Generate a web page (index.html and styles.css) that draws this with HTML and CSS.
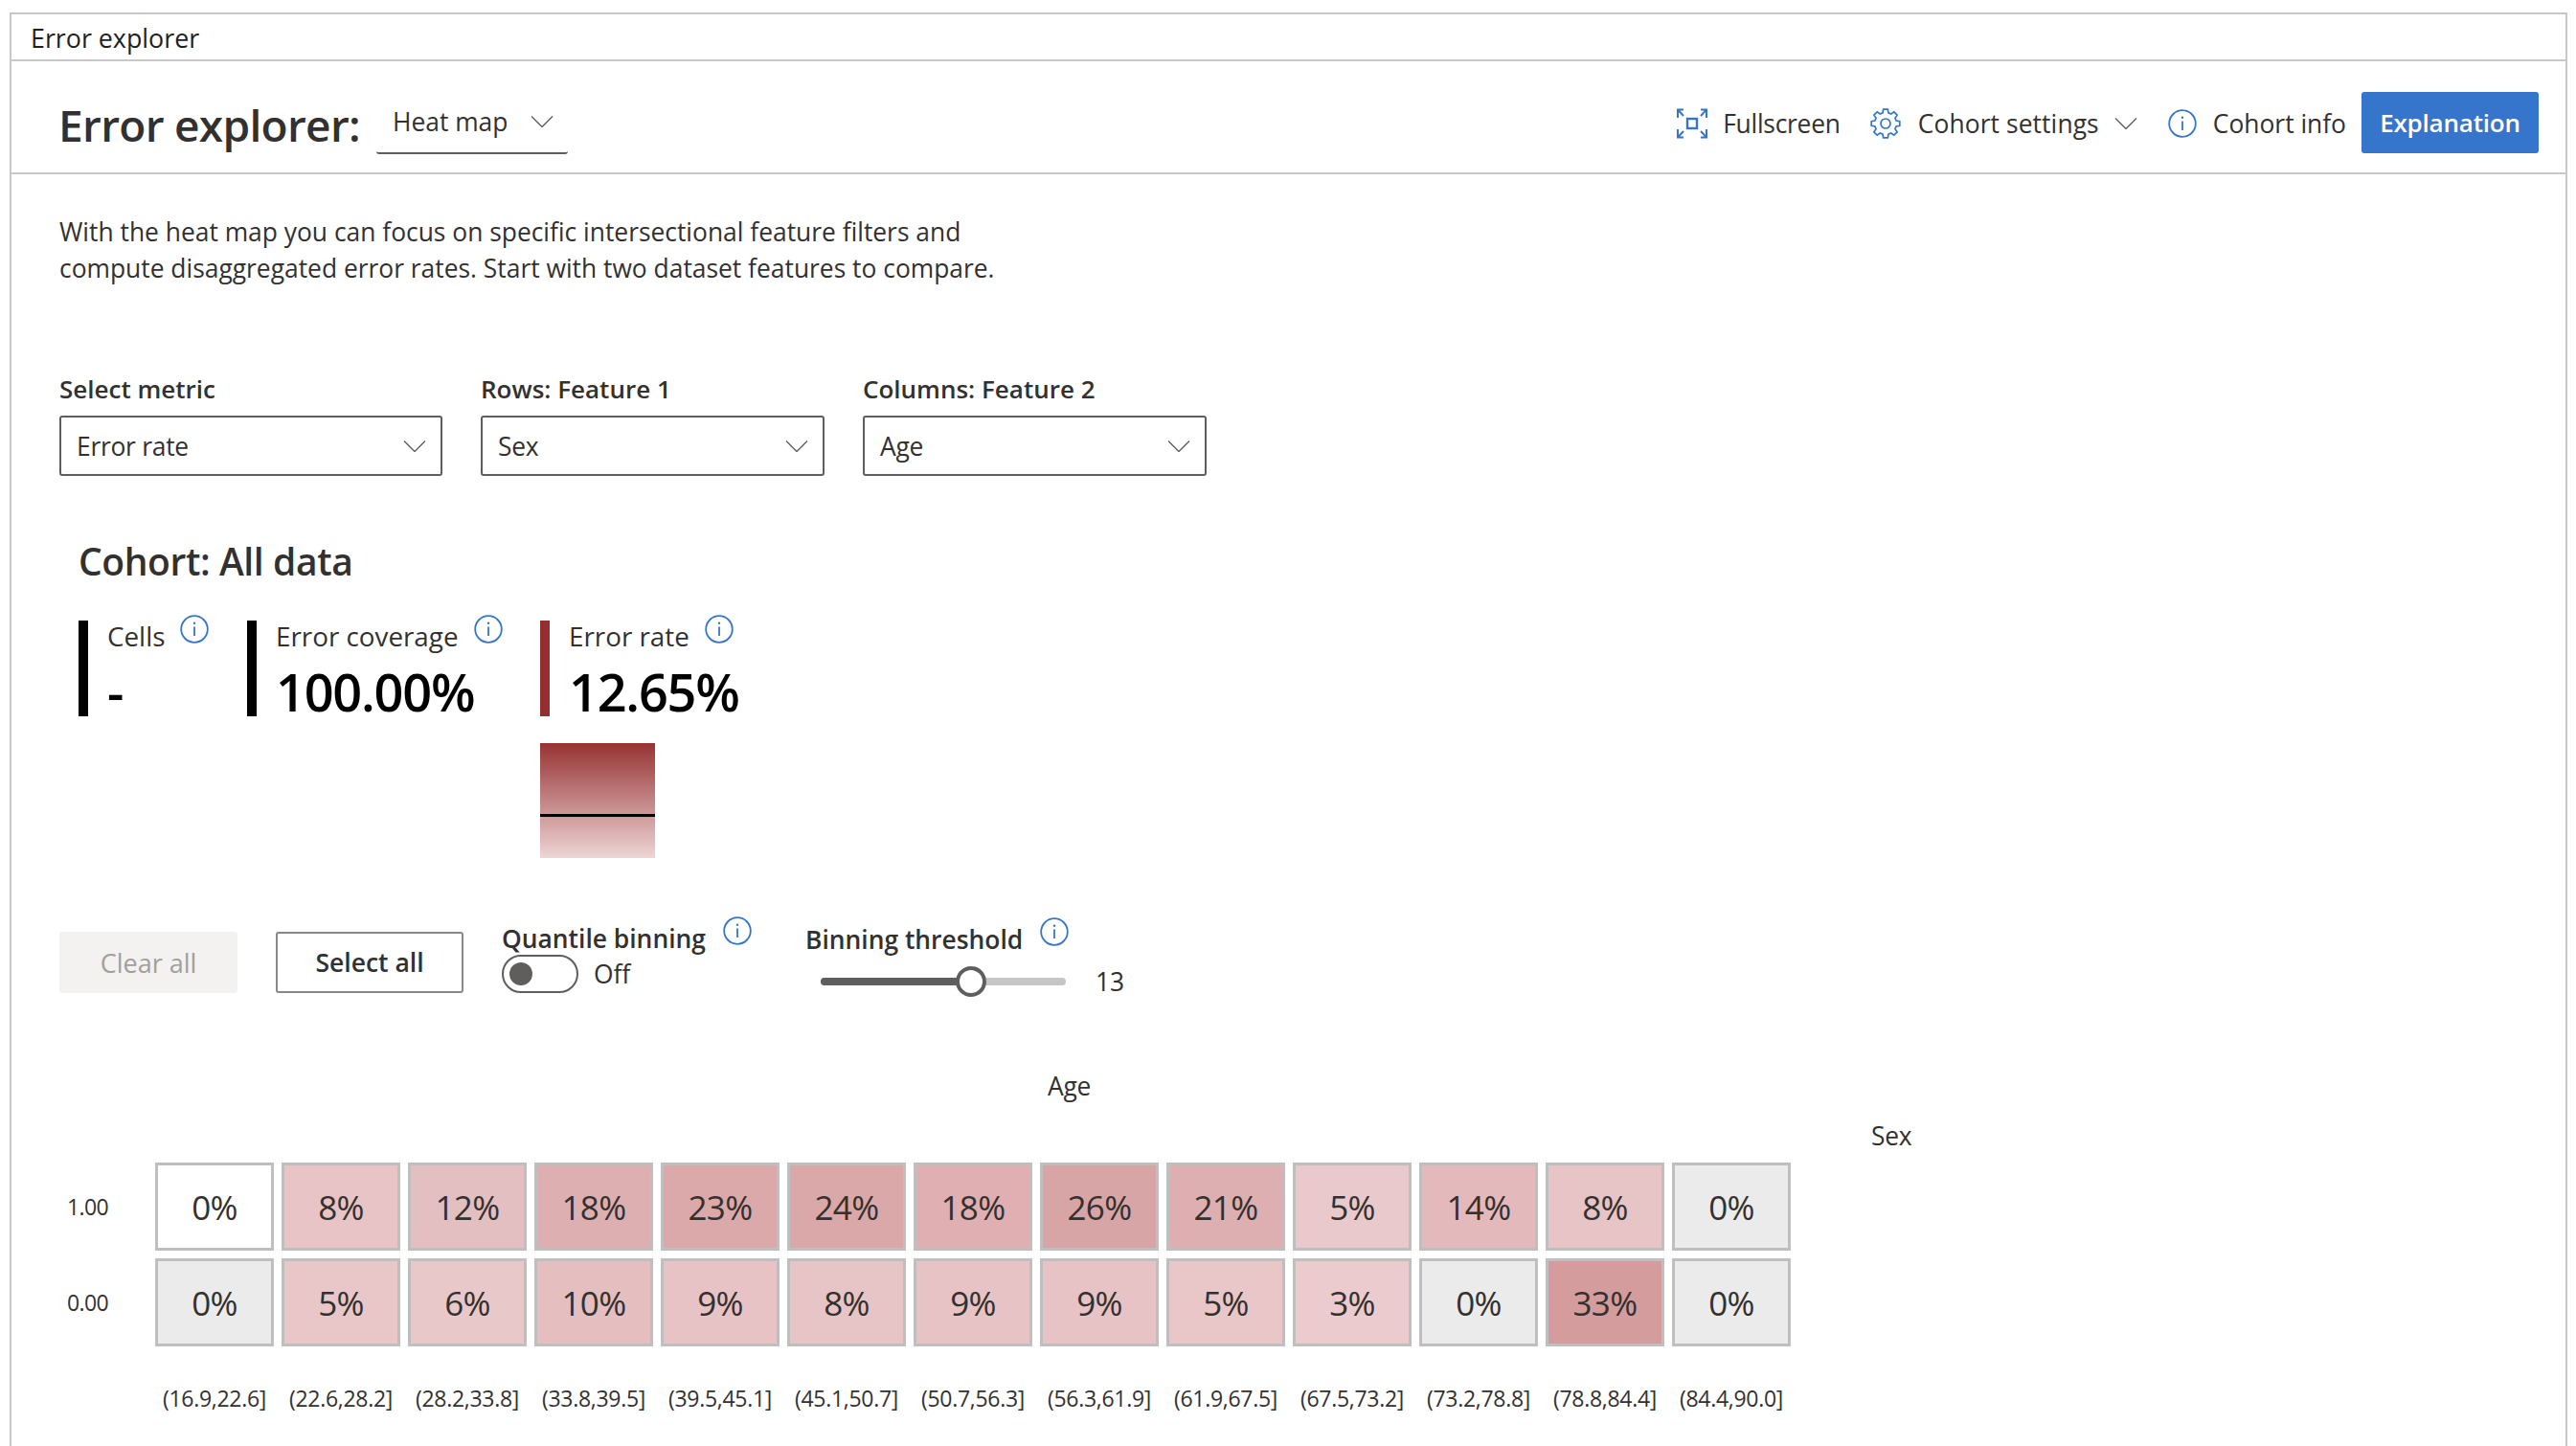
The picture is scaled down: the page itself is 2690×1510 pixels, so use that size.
FILE: index.html
```html
<!DOCTYPE html>
<html lang="en">
<head>
<meta charset="utf-8">
<title>Error explorer</title>
<link rel="stylesheet" href="styles.css">
</head>
<body>
<svg class="defs" aria-hidden="true">
  <symbol id="info" viewBox="0 0 30 30"><circle cx="15" cy="15" r="13.8" fill="none" stroke="currentColor" stroke-width="1.8"/><path d="M15 12.5V22" fill="none" stroke="currentColor" stroke-width="1.8"/><circle cx="15" cy="8.8" r="1.2" fill="currentColor"/></symbol>
  <symbol id="chev" viewBox="0 0 24 12"><path d="M1 .5 12 11.5 23 .5" fill="none" stroke="currentColor" stroke-width="1.4"/></symbol>
</svg>
<main class="frame">
  <div class="tabbar">Error explorer</div>
  <header class="head">
    <h1 class="title">Error explorer:</h1>
    <div class="viewpick"><span>Heat map</span><svg class="chev"><use href="#chev"/></svg></div>
    <nav class="actions">
      <a class="action act-full">
        <svg class="ico" viewBox="0 0 34 32" fill="none" stroke="#3576cc" stroke-width="2"><rect x="12" y="11" width="10" height="10" stroke-width="2.4"/><path d="M2 10V1.5H8M2 1.5 8 8M32 10V1.5H26M32 1.5 26 8M2 22V30.500H8M2 30.500 8 24M32 22V30.500H26M32 30.500 26 24"/></svg>
        Fullscreen</a>
      <a class="action act-gear">
        <svg class="ico" viewBox="0 0 32 32" fill="none" stroke="#3576cc" stroke-width="1.7"><polygon points="13.02,4.9 13.65,1.2 18.35,1.2 18.98,4.9 21.74,6.04 24.8,3.87 28.13,7.2 25.96,10.26 27.1,13.02 30.8,13.65 30.8,18.35 27.1,18.98 25.96,21.74 28.13,24.8 24.8,28.13 21.74,25.96 18.98,27.1 18.35,30.8 13.65,30.8 13.02,27.1 10.26,25.96 7.2,28.13 3.87,24.8 6.04,21.74 4.9,18.98 1.2,18.35 1.2,13.65 4.9,13.02 6.04,10.26 3.87,7.2 7.2,3.87 10.26,6.04"/><circle cx="16" cy="16" r="5"/></svg>
        Cohort settings<svg class="chev chev-set"><use href="#chev"/></svg></a>
      <a class="action act-info"><svg class="info"><use href="#info"/></svg>Cohort info</a>
      <button class="btn-primary">Explanation</button>
    </nav>
  </header>

  <section class="content">
    <p class="intro">With the heat map you can focus on specific intersectional feature filters and<br>compute disaggregated error rates. Start with two dataset features to compare.</p>

    <div class="selects">
      <div class="field f-metric"><label>Select metric</label><div class="select"><span>Error rate</span><svg class="chev"><use href="#chev"/></svg></div></div>
      <div class="field f-rows"><label>Rows: Feature 1</label><div class="select"><span>Sex</span><svg class="chev"><use href="#chev"/></svg></div></div>
      <div class="field f-cols"><label>Columns: Feature 2</label><div class="select"><span>Age</span><svg class="chev"><use href="#chev"/></svg></div></div>
    </div>

    <div class="cohort">
      <h2 class="cohort-title">Cohort: All data</h2>
      <div class="metrics">
        <div class="metric-col m-cells">
          <div class="metric"><div class="m-label"><span>Cells</span><svg class="info"><use href="#info"/></svg></div><div class="m-value">-</div></div>
        </div>
        <div class="metric-col m-cover">
          <div class="metric"><div class="m-label"><span>Error coverage</span><svg class="info"><use href="#info"/></svg></div><div class="m-value">100.00%</div></div>
        </div>
        <div class="metric-col m-rate">
          <div class="metric metric-red"><div class="m-label"><span>Error rate</span><svg class="info"><use href="#info"/></svg></div><div class="m-value">12.65%</div></div>
          <div class="legend"><div class="legend-line"></div></div>
        </div>
      </div>
    </div>

    <div class="controls">
      <button class="btn btn-off">Clear all</button>
      <button class="btn btn-sel">Select all</button>
      <div class="ctl ctl-q">
        <div class="ctl-label"><span>Quantile binning</span><svg class="info"><use href="#info"/></svg></div>
        <div class="toggle-row"><div class="toggle"><i class="knob"></i></div><span>Off</span></div>
      </div>
      <div class="ctl ctl-t">
        <div class="ctl-label"><span>Binning threshold</span><svg class="info"><use href="#info"/></svg></div>
        <div class="slider-row"><div class="slider"><div class="slider-fill"></div><i class="thumb"></i></div><span>13</span></div>
      </div>
    </div>

    <div class="axis-x">Age</div>
    <div class="axis-y">Sex</div>

    <div class="heat">
      <div class="row-label">1.00</div>
      <div class="cell c-w">0%</div><div class="cell c-8a">8%</div><div class="cell c-12">12%</div><div class="cell c-18a">18%</div><div class="cell c-23">23%</div><div class="cell c-24">24%</div><div class="cell c-18b">18%</div><div class="cell c-26">26%</div><div class="cell c-21">21%</div><div class="cell c-5a">5%</div><div class="cell c-14">14%</div><div class="cell c-8b">8%</div><div class="cell c-g">0%</div>
      <div class="row-label">0.00</div>
      <div class="cell c-g">0%</div><div class="cell c-5b">5%</div><div class="cell c-6">6%</div><div class="cell c-10">10%</div><div class="cell c-9">9%</div><div class="cell c-8b">8%</div><div class="cell c-9">9%</div><div class="cell c-9">9%</div><div class="cell c-5b">5%</div><div class="cell c-3">3%</div><div class="cell c-g">0%</div><div class="cell c-33">33%</div><div class="cell c-g">0%</div>
      <div class="col-spacer"></div>
      <div class="col-label">(16.9,22.6]</div><div class="col-label">(22.6,28.2]</div><div class="col-label">(28.2,33.8]</div><div class="col-label">(33.8,39.5]</div><div class="col-label">(39.5,45.1]</div><div class="col-label">(45.1,50.7]</div><div class="col-label">(50.7,56.3]</div><div class="col-label">(56.3,61.9]</div><div class="col-label">(61.9,67.5]</div><div class="col-label">(67.5,73.2]</div><div class="col-label">(73.2,78.8]</div><div class="col-label">(78.8,84.4]</div><div class="col-label">(84.4,90.0]</div>
    </div>
  </section>
</main>
</body>
</html>
```
FILE: styles.css
```css
* { box-sizing: border-box; }
html, body { margin: 0; height: 1510px; overflow: hidden; background: #fff; }
body { font-family: "Open Sans", "Noto Sans", sans-serif; font-size: 26.4px; color: #323130; }
.defs { display: none; }
.frame { margin: 13px 0 0 10px; width: 2671px; height: 1497px; border: 2px solid #c8c8c8; border-bottom: 0; }
.tabbar { height: 49px; padding-left: 20px; border-bottom: 2px solid #c8c8c8; font-size: 26.8px; line-height: 49px; color: #201f1e; }

.head { height: 118px; display: flex; align-items: center; padding: 12px 28px 0 49px; border-bottom: 2px solid #c8c8c8; }
.title { margin: 4px 17px 0 0; font-size: 46px; font-weight: 600; letter-spacing: -.7px; line-height: 60px; }
.viewpick { width: 200px; height: 64px; margin-top: 2px; padding: 0 15px 3px 17px; display: flex; align-items: center; justify-content: space-between; border-bottom: 2px solid #605e5c; border-radius: 0 0 3px 3px; }
.chev { width: 24px; height: 12px; color: #605e5c; flex: none; }
.actions { margin-left: auto; display: flex; align-items: center; }
.action { display: flex; align-items: center; padding-top: 1px; }
.ico { width: 34px; height: 32px; flex: none; }
.act-full { margin-right: 30px; letter-spacing: -.25px; }
.act-full .ico { margin-right: 15px; }
.act-gear { margin-right: 32px; letter-spacing: .1px; }
.act-gear .ico { margin-right: 17px; }
.chev-set { margin-left: 16px; }
.info { width: 30px; height: 30px; color: #3576cc; flex: none; }
.act-info .info { margin-right: 17px; }
.act-info { margin-right: 16px; }
.btn-primary { width: 185px; height: 64px; border: 0; border-radius: 3px; background: #3576cc; color: #fff; font: 600 26px "Open Sans", sans-serif; letter-spacing: -.2px; padding: 0; }

.content { padding: 41px 0 0 50px; }
.intro { margin: 0; line-height: 38px; }

.selects { display: flex; gap: 40px; margin-top: 88px; }
.field label { display: block; font-size: 26px; font-weight: 600; line-height: 38px; margin-bottom: 9px; }
.f-metric { width: 400px; }
.f-rows { width: 359px; }
.f-cols { width: 359px; }
.select { height: 63px; padding: 0 15px 0 16px; display: flex; align-items: center; justify-content: space-between; border: 2px solid #605e5c; border-radius: 3px; letter-spacing: -.25px; }

.cohort { padding-left: 20px; margin-top: 62px; }
.cohort-title { margin: 0; font-size: 39px; font-weight: 600; line-height: 54px; letter-spacing: -.4px; }
.metrics { display: flex; margin-top: 35px; align-items: flex-start; }
.m-cells { width: 176px; }
.m-cover { width: 306px; }
.metric { height: 100px; border-left: 10px solid #000; padding-left: 20px; }
.metric-red { border-left-color: #952f2f; }
.m-label { display: flex; align-items: flex-start; height: 36px; line-height: 32px; font-size: 27.8px; }
.m-label .info { margin-left: 16px; margin-top: -6px; }
.m-value { font-size: 54px; font-weight: 600; color: #000; line-height: 62px; letter-spacing: -1.2px; margin-top: 7px; }
.legend { width: 120px; height: 120px; margin-top: 28px; display: flex; align-items: center; background: linear-gradient(#973333, #eed5d5); padding-top: 30px; }
.legend-line { width: 100%; height: 3px; background: #000; }

.controls { display: flex; align-items: flex-end; margin-top: 65px; }
.btn { height: 64px; font: 600 26.5px "Open Sans", sans-serif; border-radius: 3px; padding: 0; }
.btn-off { width: 186px; margin-right: 40px; background: #f3f2f1; border: 0; color: #a19f9d; font-weight: 400; font-size: 27px; }
.btn-sel { width: 196px; margin-right: 40px; background: #fff; border: 2px solid #8a8886; color: #323130; }
.ctl-label { display: flex; align-items: flex-start; height: 38px; line-height: 38px; font-weight: 600; }
.ctl-label .info { margin-left: 18px; margin-top: -4px; }
.ctl-q { width: 317px; }
.toggle-row { display: flex; align-items: center; gap: 16px; line-height: 40px; margin-top: -2px; }
.toggle { width: 80px; height: 40px; border: 2px solid #605e5c; border-radius: 20px; padding: 6px; }
.knob { display: block; width: 24px; height: 24px; border-radius: 50%; background: #605e5c; }
.slider-row { display: flex; align-items: center; padding-left: 16px; gap: 31px; height: 24px; margin-top: 13px; }
.slider { width: 256px; height: 8px; border-radius: 4px; background: #c8c6c4; position: relative; }
.slider-fill { width: 157px; height: 8px; border-radius: 4px; background: #605e5c; }
.thumb { position: absolute; left: 141px; top: -12px; width: 32px; height: 32px; border-radius: 50%; background: #fff; border: 4px solid #605e5c; }

.axis-x { margin: 79px 0 0 1032px; line-height: 36px; height: 36px; letter-spacing: -.2px; }
.axis-y { margin: 16px 0 0 1892px; line-height: 36px; height: 36px; letter-spacing: -.3px; }

.heat { display: grid; grid-template-columns: 92px repeat(13, 124px); grid-template-rows: 92px 92px 92px; gap: 8px; margin-top: 10px; }
.row-label { display: flex; align-items: center; padding-left: 8px; font-size: 23px; letter-spacing: -.6px; }
.cell { display: flex; align-items: center; justify-content: center; border: 3px solid #bfbfbf; font-size: 35px; letter-spacing: -.6px; }
.col-label { display: flex; align-items: center; justify-content: center; font-size: 23px; letter-spacing: -.3px; white-space: nowrap; }
.c-w { background: #fff; }
.c-g { background: #ebebeb; }
.c-8a { background: #e8c4c6; }
.c-12 { background: #e4bfc1; }
.c-18a { background: #deafb1; }
.c-23 { background: #dca9ab; }
.c-24 { background: #daa8a9; }
.c-18b { background: #dfafb1; }
.c-26 { background: #d8a5a6; }
.c-21 { background: #ddafb1; }
.c-5a { background: #eac9cc; }
.c-14 { background: #e4b9bc; }
.c-8b { background: #e7c4c5; }
.c-5b { background: #e9c7c9; }
.c-6 { background: #e9c8ca; }
.c-10 { background: #e5bec0; }
.c-9 { background: #e7c3c5; }
.c-3 { background: #ebcbce; }
.c-33 { background: #d49c9d; }
```
